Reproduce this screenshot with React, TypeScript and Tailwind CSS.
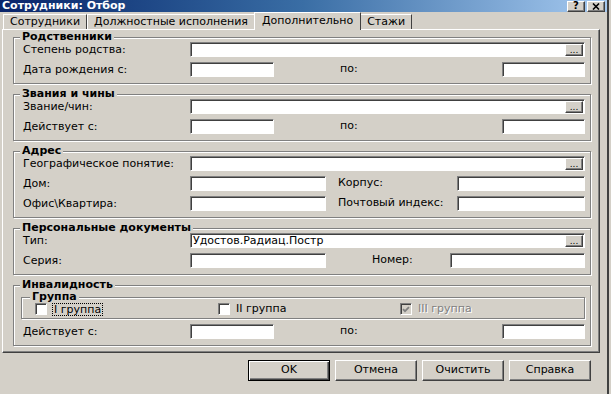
import React from "react";

const sunken =
  "bg-white border border-t-[#808080] border-l-[#808080] border-b-white border-r-white shadow-[inset_1px_1px_0_#404040]";
const raised =
  "bg-[#d4d0c8] border border-t-white border-l-white border-r-[#404040] border-b-[#404040] shadow-[inset_-1px_-1px_0_#808080]";

function Field({ className = "", value, dots }: { className?: string; value?: string; dots?: boolean }) {
  return (
    <div className={`h-[15px] flex items-center shrink-0 ${sunken} ${className}`}>
      <span className="flex-1 pl-[2px] leading-[13px] text-black whitespace-nowrap overflow-hidden">{value}</span>
      {dots && (
        <span className={`w-[18px] h-[12px] mr-[1px] flex items-end justify-center text-[9px] leading-[9px] ${raised}`}>
          ...
        </span>
      )}
    </div>
  );
}

function Row({ label, children }: { label: string; children: React.ReactNode }) {
  return (
    <div className="flex items-center h-[15px]">
      <span className="w-[167px] shrink-0 whitespace-nowrap leading-[15px]">{label}</span>
      {children}
    </div>
  );
}

function Group({ title, children }: { title: string; children: React.ReactNode }) {
  return (
    <fieldset className="border border-[#808080] shadow-[inset_1px_1px_0_#fff,1px_1px_0_#fff]">
      <legend className="ml-[6px] px-[2px] font-bold leading-[10px] bg-[#d4d0c8]">{title}</legend>
      <div className="flex flex-col gap-[5px] pl-[9px] pr-[5px] pb-[6px]">{children}</div>
    </fieldset>
  );
}

function Check({ checked, disabled }: { checked?: boolean; disabled?: boolean }) {
  return (
    <span
      className={`w-[12px] h-[12px] shrink-0 flex items-center justify-center border border-t-[#808080] border-l-[#808080] border-b-white border-r-white shadow-[inset_1px_1px_0_#404040] ${
        disabled ? "bg-[#d4d0c8]" : "bg-white"
      }`}
    >
      {checked && (
        <svg width="8" height="7" viewBox="0 0 8 7">
          <path d="M1 3.2 L3 5.2 L7 1.2" stroke="#808080" strokeWidth="1.8" fill="none" />
        </svg>
      )}
    </span>
  );
}

function Tab({ label, active }: { label: string; active?: boolean }) {
  return active ? (
    <div className="relative z-10 h-[18px] -mb-[1px] -mx-[1px] px-[7px] flex items-center bg-[#d4d0c8] border-t border-l border-r border-t-white border-l-white border-r-[#404040]">
      {label}
    </div>
  ) : (
    <div className="mt-[2px] h-[15px] px-[6px] flex items-center border-t border-l border-r border-t-white border-l-white border-r-[#404040]">
      {label}
    </div>
  );
}

function Btn({ children, primary }: { children: React.ReactNode; primary?: boolean }) {
  return (
    <button
      className={`w-[82px] h-[21px] flex items-center justify-center text-black ${
        primary
          ? "bg-[#d4d0c8] border border-black shadow-[inset_1px_1px_0_#fff,inset_-1px_-1px_0_#404040,inset_-2px_-2px_0_#808080]"
          : raised
      }`}
    >
      {children}
    </button>
  );
}

export default function App() {
  return (
    <div className="w-[611px] h-[394px] bg-[#d4d0c8] overflow-hidden font-['DejaVu_Sans',sans-serif] text-[11px] text-black">
      <div className="w-[609px] h-[394px] flex flex-col border-r-2 border-[#404040]">
        {/* Title bar */}
        <div className="h-[12px] flex items-center justify-between pl-[2px] pr-[2px] bg-gradient-to-r from-[#0a246a] via-[#3a6ea5] to-[#a6caf0]">
          <span className="font-bold text-white leading-[12px]">Сотрудники: Отбор</span>
          <div className="flex gap-[2px]">
            <span className={`w-[18px] h-[11px] flex items-center justify-center font-bold text-[10px] leading-[10px] ${raised}`}>?</span>
            <span className={`w-[18px] h-[11px] flex items-center justify-center ${raised}`}>
              <svg width="8" height="7" viewBox="0 0 8 7">
                <path d="M1 0.5 L7 6.5 M7 0.5 L1 6.5" stroke="#000" strokeWidth="1.6" />
              </svg>
            </span>
          </div>
        </div>

        <div className="flex flex-col pl-[2px] pr-[7px]">
          {/* Tabs */}
          <div className="h-[17px] flex items-start pl-[1px]">
            <Tab label="Сотрудники" />
            <Tab label="Должностные исполнения" />
            <Tab label="Дополнительно" active />
            <Tab label="Стажи" />
          </div>

          {/* Tab page */}
          <div className="h-[324px] flex flex-col gap-[5px] pt-[2px] pl-[10px] pr-[8px] border border-t-white border-l-white border-r-[#404040] border-b-[#404040] shadow-[inset_-1px_-1px_0_#808080]">
            <Group title="Родственники">
              <Row label="Степень родства:">
                <Field className="w-[395px]" dots />
              </Row>
              <Row label="Дата рождения с:">
                <Field className="w-[84px]" />
                <span className="ml-[66px] w-[162px]">по:</span>
                <Field className="w-[83px]" />
              </Row>
            </Group>

            <Group title="Звания и чины">
              <Row label="Звание/чин:">
                <Field className="w-[395px]" dots />
              </Row>
              <Row label="Действует с:">
                <Field className="w-[84px]" />
                <span className="ml-[66px] w-[162px]">по:</span>
                <Field className="w-[83px]" />
              </Row>
            </Group>

            <Group title="Адрес">
              <Row label="Географическое понятие:">
                <Field className="w-[395px]" dots />
              </Row>
              <Row label="Дом:">
                <Field className="w-[136px]" />
                <span className="ml-[12px] w-[119px]">Корпус:</span>
                <Field className="w-[128px]" />
              </Row>
              <Row label="Офис\Квартира:">
                <Field className="w-[136px]" />
                <span className="ml-[12px] w-[119px] whitespace-nowrap">Почтовый индекс:</span>
                <Field className="w-[128px]" />
              </Row>
            </Group>

            <Group title="Персональные документы">
              <Row label="Тип:">
                <Field className="w-[395px]" value="Удостов.Радиац.Постр" dots />
              </Row>
              <Row label="Серия:">
                <Field className="w-[136px]" />
                <span className="ml-[46px] w-[78px]">Номер:</span>
                <Field className="w-[135px]" />
              </Row>
            </Group>

            <Group title="Инвалидность">
              <fieldset className="-ml-[2px] mt-[2px] border border-[#808080] shadow-[inset_1px_1px_0_#fff,1px_1px_0_#fff]">
                <legend className="ml-[8px] px-[2px] font-bold leading-[10px] bg-[#d4d0c8]">Группа</legend>
                <div className="flex items-center h-[12px] mt-[1px] mb-[3px] pl-[13px]">
                  <div className="w-[183px] flex items-center gap-[5px]">
                    <Check />
                    <span className="px-[1px] leading-[11px] border border-dotted border-black">I группа</span>
                  </div>
                  <div className="w-[182px] flex items-center gap-[6px]">
                    <Check />
                    <span>II группа</span>
                  </div>
                  <div className="flex items-center gap-[6px]">
                    <Check checked disabled />
                    <span className="text-[#808080] [text-shadow:1px_1px_0_#fff]">III группа</span>
                  </div>
                </div>
              </fieldset>
              <Row label="Действует с:">
                <Field className="w-[84px]" />
                <span className="ml-[66px] w-[162px]">по:</span>
                <Field className="w-[83px]" />
              </Row>
            </Group>
          </div>

          {/* Buttons */}
          <div className="mt-[7px] flex justify-end gap-[5px] pr-[9px]">
            <Btn primary>OK</Btn>
            <Btn>Отмена</Btn>
            <Btn>Очистить</Btn>
            <Btn>Справка</Btn>
          </div>
        </div>
      </div>
    </div>
  );
}
